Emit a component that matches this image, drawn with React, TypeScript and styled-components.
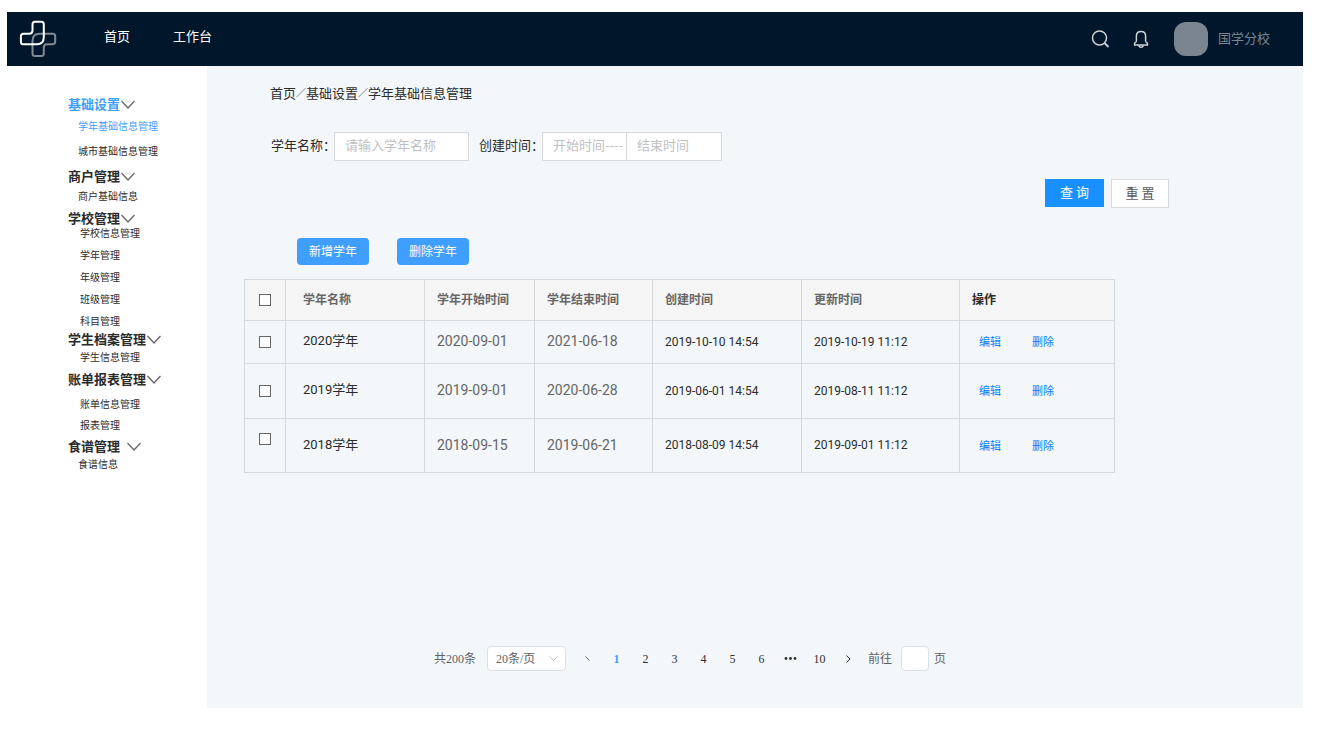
import React from 'react';
import styled, { createGlobalStyle, css } from 'styled-components';

const cjk = '"Noto Sans CJK SC", sans-serif';

const GlobalStyle = createGlobalStyle`
  * { box-sizing: border-box; }
  body {
    margin: 0;
    background: #fff;
    color: #2b2b2b;
    font-family: ${cjk};
    font-size: 13px;
    line-height: 20px;
  }
  a { color: inherit; text-decoration: none; }
  button, input, select { font: inherit; color: inherit; margin: 0; }
  button { cursor: pointer; }
`;

const Shell = styled.div`
  display: flex;
  flex-direction: column;
  min-height: 100vh;
  padding: 12px 16px 22px 7px;
`;

const Header = styled.header`
  display: flex;
  align-items: center;
  height: 54px;
  padding: 0 33px 0 12px;
  background: #00172b;
  color: #fff;
`;

const Logo = styled.svg`
  width: 38px;
  height: 38px;
`;

const Nav = styled.nav`
  display: flex;
  gap: 43px;
  margin-left: 47px;
  padding-bottom: 6px;
`;

const HeaderTools = styled.div`
  display: flex;
  align-items: center;
  margin-left: auto;
`;

const IconButton = styled.button`
  display: flex;
  padding: 0;
  border: 0;
  margin-right: 22px;
  background: none;
  color: #ccd1d6;
`;

const Avatar = styled.span`
  width: 34px;
  height: 34px;
  margin-left: 3px;
  border-radius: 12px;
  background: #7a858f;
`;

const UserName = styled.span`
  margin-left: 10px;
  padding-bottom: 2px;
  color: #7a858f;
`;

const Body = styled.div`
  display: grid;
  grid-template-columns: 200px 1fr;
  flex: 1;
`;

const Sidebar = styled.nav`
  padding: 30px 0 0 61px;
`;

const MenuGroup = styled.section<{ $after: number }>`
  margin-bottom: ${(p) => p.$after}px;
`;

const MenuHeading = styled.button<{ $active?: boolean; $gap?: number }>`
  display: flex;
  align-items: center;
  gap: ${(p) => p.$gap ?? 0}px;
  padding: 0;
  border: 0;
  background: none;
  color: ${(p) => (p.$active ? '#409eff' : '#2b2b2b')};
  font-weight: 700;
  line-height: 16px;
  white-space: nowrap;
`;

const MenuList = styled.ul<{ $before: number; $gap: number; $indent: number }>`
  display: flex;
  flex-direction: column;
  gap: ${(p) => p.$gap}px;
  margin: 0;
  padding: ${(p) => p.$before}px 0 0 ${(p) => p.$indent}px;
  list-style: none;
  font-size: 10px;
  line-height: 14px;
`;

const MenuLink = styled.a<{ $active?: boolean }>`
  display: block;
  color: ${(p) => (p.$active ? '#409eff' : '#2b2b2b')};
`;

const Main = styled.main`
  display: flex;
  flex-direction: column;
  min-width: 0;
  padding-bottom: 37px;
  background: #f3f7fa;
`;

const Breadcrumb = styled.nav`
  display: flex;
  margin: 17px 0 0 63px;
`;

const Slash = styled.span`
  font-size: 10px;
`;

const Filters = styled.form`
  padding: 29px 134px 0 64px;
`;

const FilterRow = styled.div`
  display: flex;
  align-items: center;
`;

const Label = styled.label`
  width: 63px;
  padding-bottom: 3px;
  white-space: nowrap;
`;

const field = css`
  height: 29px;
  padding: 0 0 4px 10px;
  border: 1px solid #d9d9d9;
  border-radius: 0;
  background: #fff;
  outline: 0;
  &::placeholder { color: #bfbfbf; opacity: 1; }
`;

const NameInput = styled.input`
  ${field}
  width: 135px;
  margin-right: 10px;
`;

const DateInput = styled.input<{ $width: number }>`
  ${field}
  width: ${(p) => p.$width}px;
  & + & { border-left: 0; }
`;

const FilterActions = styled.div`
  display: flex;
  justify-content: flex-end;
  gap: 7px;
  margin-top: 18px;
`;

const FormButton = styled.button<{ $primary?: boolean }>`
  width: ${(p) => (p.$primary ? 59 : 58)}px;
  height: ${(p) => (p.$primary ? 28 : 29)}px;
  padding: 0 0 2px;
  border: 1px solid ${(p) => (p.$primary ? '#1890ff' : '#d9d9d9')};
  background: ${(p) => (p.$primary ? '#1890ff' : '#fff')};
  color: ${(p) => (p.$primary ? '#fff' : '#595959')};
`;

const Toolbar = styled.div`
  display: flex;
  gap: 28px;
  margin: 30px 0 14px 90px;
`;

const ToolButton = styled.button`
  width: 72px;
  height: 27px;
  padding: 0 0 1px;
  border: 0;
  border-radius: 4px;
  background: #409eff;
  color: #fff;
  font-size: 12px;
`;

const TableWrap = styled.div`
  margin: 0 188px 24px 37px;
`;

const Table = styled.table`
  width: 100%;
  table-layout: fixed;
  border-collapse: collapse;
  font-family: Roboto, ${cjk};
  font-size: 12px;
  line-height: 20px;
`;

const Th = styled.th<{ $dark?: boolean }>`
  height: 41px;
  padding: 0 12px;
  border: 1px solid #d9d9d9;
  background: #f5f5f5;
  color: ${(p) => (p.$dark ? '#2b2b2b' : '#666')};
  text-align: left;
`;

const Row = styled.tr<{ $height: number }>`
  height: ${(p) => p.$height}px;
`;

const Td = styled.td`
  padding: 0 12px 1px;
  border: 1px solid #d9d9d9;
  white-space: nowrap;
`;

const NameTh = styled(Th)`padding-left: 17px;`;
const NameTd = styled(Td)`
  padding-left: 17px;
  padding-bottom: 2px;
  font-size: 13px;
`;

const DayTd = styled(Td)`
  padding-bottom: 2px;
  color: #666;
  font-size: 14px;
`;

const TickTd = styled(Td)<{ $top?: boolean }>`
  padding: ${(p) => (p.$top ? '14px' : 0)} 0 0 14px;
  vertical-align: ${(p) => (p.$top ? 'top' : 'middle')};
`;

const TickTh = styled(Th)`padding: 0 0 0 14px;`;

const Tick = styled.input`
  display: block;
  appearance: none;
  width: 12px;
  height: 12px;
  border: 1px solid #666;
  background: #fff;
  &:checked { background: #409eff; }
`;

const RowActions = styled.div`
  display: flex;
  gap: 31px;
  padding: 3px 0 0 7px;
  color: #0a7cff;
  font-size: 11px;
`;

const Pagination = styled.nav`
  display: flex;
  align-items: center;
  margin-top: auto;
  padding-left: 227px;
  font-family: "Liberation Serif", ${cjk};
  font-size: 12px;
  color: #606266;
`;

const SelectBox = styled.span`
  display: grid;
  align-items: center;
  margin: 0 7px 0 11px;
  & > * { grid-area: 1 / 1; }
  & > svg { justify-self: end; margin-right: 8px; pointer-events: none; }
`;

const PageSize = styled.select`
  appearance: none;
  width: 79px;
  height: 25px;
  padding: 0 8px;
  border: 1px solid #dcdfe6;
  border-radius: 4px;
  background: #fff;
`;

const PageButton = styled.button<{ $active?: boolean }>`
  display: flex;
  align-items: center;
  justify-content: center;
  width: 29px;
  height: 25px;
  padding: 0;
  border: 0;
  background: none;
  color: ${(p) => (p.$active ? '#409eff' : '#303133')};
  font-weight: ${(p) => (p.$active ? 700 : 400)};
`;

const JumpLabel = styled.label`
  margin: 0 9px 0 5px;
`;

const JumpInput = styled.input`
  width: 28px;
  height: 25px;
  margin-right: 5px;
  padding: 0 4px;
  border: 1px solid #dcdfe6;
  border-radius: 4px;
  background: #fff;
`;

const Chevron = () => (
  <svg width="16" height="10" viewBox="0 0 16 10" fill="none" stroke="#666" strokeWidth="1.3">
    <path d="M1.5 2 8 9 14.5 2" />
  </svg>
);

const menu = [
  { title: '基础设置', active: true, items: ['学年基础信息管理', '城市基础信息管理'], before: 7, gap: 11, indent: 10, after: 10 },
  { title: '商户管理', items: ['商户基础信息'], before: 5, gap: 8, indent: 10, after: 7 },
  { title: '学校管理', items: ['学校信息管理', '学年管理', '年级管理', '班级管理', '科目管理'], before: 0, gap: 8, indent: 12, after: 3 },
  { title: '学生档案管理', items: ['学生信息管理'], before: 3, gap: 8, indent: 12, after: 7 },
  { title: '账单报表管理', items: ['账单信息管理', '报表管理'], before: 10, gap: 7, indent: 12, after: 6 },
  { title: '食谱管理', items: ['食谱信息'], before: 3, gap: 8, indent: 10, after: 0, headGap: 6 },
];

const years = [
  { name: '2020学年', start: '2020-09-01', end: '2021-06-18', created: '2019-10-10 14:54', updated: '2019-10-19 11:12', height: 43 },
  { name: '2019学年', start: '2019-09-01', end: '2020-06-28', created: '2019-06-01 14:54', updated: '2019-08-11 11:12', height: 55 },
  { name: '2018学年', start: '2018-09-15', end: '2019-06-21', created: '2018-08-09 14:54', updated: '2019-09-01 11:12', height: 54, tickTop: true },
];

export default function App() {
  return (
    <Shell>
      <GlobalStyle />
      <Header>
        <Logo viewBox="19 20 38 38" fill="none" strokeWidth="2" strokeLinejoin="round">
          <path
            stroke="#7f8a94"
            d="M53 33.7H39.5Q32.5 33.7 32.5 41V53.5Q32.5 56 35 56H41.5Q43.8 56 43.8 53.5V47.5Q43.8 44.2 47 44.2H52.5Q55.2 44.2 55.2 41.5V36.3Q55.2 33.7 53 33.7Z"
          />
          <path
            stroke="#fff"
            d="M23 44.2H37Q43.8 44.2 43.8 37V24.3Q43.8 21.8 41.3 21.8H35Q32.5 21.8 32.5 24.3V30.5Q32.5 33.7 29 33.7H23.5Q20.9 33.7 20.9 36.3V41.7Q20.9 44.2 23 44.2Z"
          />
        </Logo>
        <Nav aria-label="主导航">
          <a href="#home">首页</a>
          <a href="#workbench">工作台</a>
        </Nav>
        <HeaderTools>
          <IconButton type="button" aria-label="搜索">
            <svg width="20" height="20" viewBox="0 0 20 20" fill="none" stroke="currentColor" strokeWidth="1.5">
              <circle cx="8.5" cy="9" r="7" />
              <path d="m13.5 14 4 4" strokeWidth="1.8" />
            </svg>
          </IconButton>
          <IconButton type="button" aria-label="通知">
            <svg width="16" height="20" viewBox="0 0 16 20" fill="none" stroke="currentColor" strokeWidth="1.5">
              <path d="M3.4 12V7Q3.4 2.4 8 2.4T12.6 7V12Q12.8 13.3 14.4 14.2V16H1.6V14.2Q3.2 13.3 3.4 12Z" />
              <path d="M5.8 16.2Q6 18.3 8 18.3T10.2 16.2" />
            </svg>
          </IconButton>
          <Avatar />
          <UserName>国学分校</UserName>
        </HeaderTools>
      </Header>
      <Body>
        <Sidebar aria-label="侧边菜单">
          {menu.map((g) => (
            <MenuGroup key={g.title} $after={g.after}>
              <MenuHeading type="button" $active={g.active} $gap={g.headGap}>
                {g.title}
                <Chevron />
              </MenuHeading>
              <MenuList $before={g.before} $gap={g.gap} $indent={g.indent}>
                {g.items.map((item, i) => (
                  <li key={item}>
                    <MenuLink href="#menu" $active={g.active && i === 0}>{item}</MenuLink>
                  </li>
                ))}
              </MenuList>
            </MenuGroup>
          ))}
        </Sidebar>
        <Main>
          <Breadcrumb aria-label="面包屑">
            <a href="#home">首页</a>
            <Slash>／</Slash>
            <a href="#base">基础设置</a>
            <Slash>／</Slash>
            <span>学年基础信息管理</span>
          </Breadcrumb>
          <Filters onSubmit={(e) => e.preventDefault()}>
            <FilterRow>
              <Label htmlFor="year-name">学年名称：</Label>
              <NameInput id="year-name" placeholder="请输入学年名称" />
              <Label htmlFor="start-time">创建时间：</Label>
              <DateInput id="start-time" placeholder="开始时间----" $width={85} />
              <DateInput aria-label="结束时间" placeholder="结束时间" $width={95} />
            </FilterRow>
            <FilterActions>
              <FormButton type="submit" $primary>查 询</FormButton>
              <FormButton type="reset">重 置</FormButton>
            </FilterActions>
          </Filters>
          <Toolbar>
            <ToolButton type="button">新增学年</ToolButton>
            <ToolButton type="button">删除学年</ToolButton>
          </Toolbar>
          <TableWrap>
            <Table>
              <colgroup>
                <col width="41" />
                <col width="139" />
                <col width="110" />
                <col width="118" />
                <col width="149" />
                <col width="158" />
                <col />
              </colgroup>
              <thead>
                <tr>
                  <TickTh><Tick type="checkbox" aria-label="全选" /></TickTh>
                  <NameTh>学年名称</NameTh>
                  <Th>学年开始时间</Th>
                  <Th>学年结束时间</Th>
                  <Th>创建时间</Th>
                  <Th>更新时间</Th>
                  <Th $dark>操作</Th>
                </tr>
              </thead>
              <tbody>
                {years.map((y) => (
                  <Row key={y.name} $height={y.height}>
                    <TickTd $top={y.tickTop}><Tick type="checkbox" aria-label={y.name} /></TickTd>
                    <NameTd>{y.name}</NameTd>
                    <DayTd>{y.start}</DayTd>
                    <DayTd>{y.end}</DayTd>
                    <Td>{y.created}</Td>
                    <Td>{y.updated}</Td>
                    <Td>
                      <RowActions>
                        <a href="#edit">编辑</a>
                        <a href="#delete">删除</a>
                      </RowActions>
                    </Td>
                  </Row>
                ))}
              </tbody>
            </Table>
          </TableWrap>
          <Pagination aria-label="分页">
            <span>共200条</span>
            <SelectBox>
              <PageSize aria-label="每页条数" defaultValue="20">
                <option value="20">20条/页</option>
              </PageSize>
              <svg width="9" height="6" viewBox="0 0 9 6" fill="none" stroke="#c0c4cc">
                <path d="m.5.5 4 4 4-4" />
              </svg>
            </SelectBox>
            <PageButton type="button" aria-label="上一页">
              <svg width="5" height="5" viewBox="0 0 5 5" fill="none" stroke="#606266">
                <path d="m.5.5 4 4" />
              </svg>
            </PageButton>
            {[1, 2, 3, 4, 5, 6].map((n) => (
              <PageButton key={n} type="button" $active={n === 1}>{n}</PageButton>
            ))}
            <PageButton type="button" aria-label="更多页">
              <svg width="13" height="3" viewBox="0 0 13 3" fill="#303133">
                <circle cx="2" cy="1.5" r="1.4" />
                <circle cx="6.5" cy="1.5" r="1.4" />
                <circle cx="11" cy="1.5" r="1.4" />
              </svg>
            </PageButton>
            <PageButton type="button">10</PageButton>
            <PageButton type="button" aria-label="下一页">
              <svg width="5" height="8" viewBox="0 0 5 8" fill="none" stroke="#303133">
                <path d="m.5.5 3.5 3.5L.5 7.5" />
              </svg>
            </PageButton>
            <JumpLabel htmlFor="jump">前往</JumpLabel>
            <JumpInput id="jump" />
            <span>页</span>
          </Pagination>
        </Main>
      </Body>
    </Shell>
  );
}
